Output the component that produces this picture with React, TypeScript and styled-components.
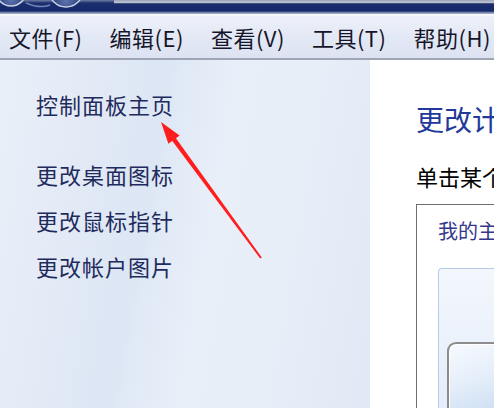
import styled, { createGlobalStyle } from "styled-components";

const GlobalStyle = createGlobalStyle`
  html, body {
    margin: 0;
    padding: 0;
    overflow: hidden;
    background: #ffffff;
  }
  body {
    font-family: "Noto Sans CJK SC", "Noto Sans", sans-serif;
  }
`;

const Window = styled.div`
  position: relative;
  width: 494px;
  height: 408px;
  display: flex;
  flex-direction: column;
  overflow: hidden;
`;

const TitleBar = styled.div`
  height: 14px;
  display: flex;
  align-items: flex-start;
  background: linear-gradient(180deg, #6f7ea6 0px, #1c2f6e 3px, #13286a 11px, #5a6b98 12px, #b6bfd6 14px);
  border-bottom: 2px solid #f6f7fb;
`;

const NavButtons = styled.svg`
  flex: none;
  display: block;
`;

const AddressEdge = styled.div`
  flex: 1;
  margin-left: 18px;
  height: 3px;
  background: linear-gradient(180deg, #9aa3ba, #c4c9d6);
  border-bottom: 1px solid #3e4f80;
`;

const MenuBar = styled.nav`
  height: 42px;
  display: flex;
  align-items: center;
  gap: 27px;
  padding-left: 9px;
  background: linear-gradient(180deg, #eef1f9 0%, #e3e8f5 50%, #dde3f2 100%);
  border-bottom: 2px solid #9ea5b5;
`;

const MenuItem = styled.span`
  font-size: 22px;
  letter-spacing: 0.5px;
  color: #16162a;
  white-space: nowrap;
`;

const Body = styled.div`
  flex: 1;
  display: flex;
  min-height: 0;
`;

const Sidebar = styled.aside`
  width: 370px;
  flex: none;
  display: flex;
  flex-direction: column;
  gap: 16px;
  padding: 29px 0 0 36px;
  box-sizing: border-box;
  background: linear-gradient(100deg, #eaf0f9 0%, #e3eaf6 22%, #dce6f4 38%, #e9eff9 55%, #e7eef8 75%, #e0e8f5 100%);
`;

const TaskLink = styled.a<{ $home?: boolean }>`
  font-size: 22px;
  line-height: 30px;
  letter-spacing: 1px;
  color: #1f2b5c;
  text-decoration: none;
  white-space: nowrap;
  margin-bottom: ${(p) => (p.$home ? "24px" : "0")};
`;

const Content = styled.main`
  flex: 1;
  min-width: 0;
  overflow: hidden;
  background: #ffffff;
  padding: 41px 0 0 46px;
  display: flex;
  flex-direction: column;
`;

const Heading = styled.h1`
  margin: 0;
  font-size: 28px;
  line-height: 36px;
  font-weight: normal;
  color: #22399a;
  white-space: nowrap;
`;

const Instruction = styled.p`
  margin: 24px 0 0;
  font-size: 22px;
  line-height: 30px;
  color: #000000;
  white-space: nowrap;
`;

const ThemeBox = styled.section`
  margin-top: 13px;
  flex: 1;
  border: 1px solid #6f6f6f;
  border-right: none;
  border-bottom: none;
  padding: 12px 0 0 21px;
  display: flex;
  flex-direction: column;
`;

const GroupLabel = styled.div`
  font-size: 20px;
  line-height: 28px;
  color: #35378c;
  white-space: nowrap;
`;

const ThemePanel = styled.div`
  margin-top: 23px;
  flex: 1;
  border: 1px solid #b4cbea;
  border-right: none;
  border-bottom: none;
  border-top-left-radius: 4px;
  background: linear-gradient(180deg, #f3f7fd 0%, #e4edf9 100%);
  padding: 73px 0 0 8px;
  display: flex;
`;

const ThemeTile = styled.div`
  flex: 1;
  border: 2px solid #8c8c8c;
  border-right: none;
  border-bottom: none;
  border-top-left-radius: 9px;
  box-shadow: inset 1px 1px 0 #ffffff;
  background: linear-gradient(160deg, #f7faff 0%, #e3edf9 60%, #cfe0f4 100%);
`;

const ArrowLayer = styled.svg`
  position: absolute;
  left: 0;
  top: 0;
  pointer-events: none;
`;

export default function App() {
  return (
    <>
      <GlobalStyle />
      <Window>
        <TitleBar>
          <NavButtons width="96" height="14" viewBox="0 0 96 14">
            <defs>
              <radialGradient id="glass" cx="50%" cy="80%" r="60%">
                <stop offset="0%" stopColor="#5d74b0" />
                <stop offset="100%" stopColor="#1b2d68" />
              </radialGradient>
            </defs>
            <circle cx="11" cy="-9" r="15" fill="url(#glass)" stroke="#c9d2e6" strokeWidth="1.5" />
            <circle cx="66" cy="-10" r="17" fill="url(#glass)" stroke="#c9d2e6" strokeWidth="1.5" />
            <path d="M26 3 Q40 9 50 5" fill="none" stroke="#6f83b8" strokeWidth="1.5" />
          </NavButtons>
          <AddressEdge />
        </TitleBar>
        <MenuBar>
          <MenuItem>文件(F)</MenuItem>
          <MenuItem>编辑(E)</MenuItem>
          <MenuItem>查看(V)</MenuItem>
          <MenuItem>工具(T)</MenuItem>
          <MenuItem>帮助(H)</MenuItem>
        </MenuBar>
        <Body>
          <Sidebar>
            <TaskLink $home>控制面板主页</TaskLink>
            <TaskLink>更改桌面图标</TaskLink>
            <TaskLink>更改鼠标指针</TaskLink>
            <TaskLink>更改帐户图片</TaskLink>
          </Sidebar>
          <Content>
            <Heading>更改计算机上的视觉效果和声音</Heading>
            <Instruction>单击某个主题立即更改桌面背景、窗口颜色、声音和屏幕保护程序。</Instruction>
            <ThemeBox>
              <GroupLabel>我的主题 (1)</GroupLabel>
              <ThemePanel>
                <ThemeTile />
              </ThemePanel>
            </ThemeBox>
          </Content>
        </Body>
        <ArrowLayer width="494" height="408" viewBox="0 0 494 408">
          <polygon points="261.8,257.4 171.8,132.6 168.2,135.4 260.2,258.6" fill="#ff1d1d" />
          <polygon points="161,122 179.6,135.6 168.4,143.8" fill="#ff1d1d" />
        </ArrowLayer>
      </Window>
    </>
  );
}
